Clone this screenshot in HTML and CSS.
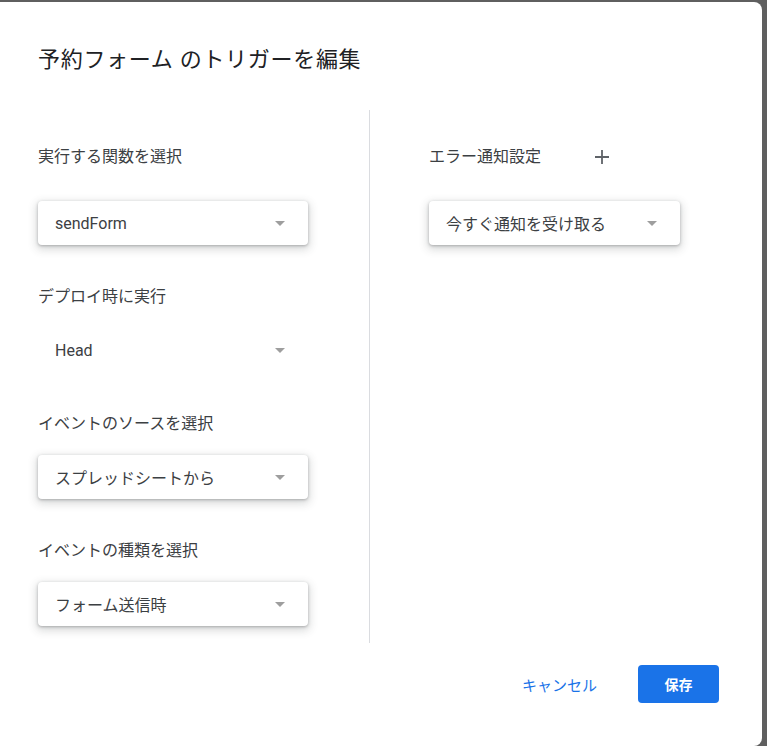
FILE: index.html
```html
<!DOCTYPE html>
<html lang="ja">
<head>
    <meta charset="UTF-8">
    <meta name="viewport" content="width=device-width, initial-scale=1.0">
    <title>トリガーを編集</title>
    <link rel="stylesheet" href="styles.css">
</head>
<body>
    <div class="dialog">
        <h1 class="title">予約フォーム のトリガーを編集</h1>

        <div class="columns">
            <div class="col col-left">
                <div class="field field-first">
                    <div class="field-label">実行する関数を選択</div>
                    <div class="select">
                        <span class="select-text">sendForm</span>
                        <span class="arrow"></span>
                    </div>
                </div>

                <div class="field">
                    <div class="field-label">デプロイ時に実行</div>
                    <div class="select flat">
                        <span class="select-text">Head</span>
                        <span class="arrow"></span>
                    </div>
                </div>

                <div class="field">
                    <div class="field-label">イベントのソースを選択</div>
                    <div class="select">
                        <span class="select-text">スプレッドシートから</span>
                        <span class="arrow"></span>
                    </div>
                </div>

                <div class="field">
                    <div class="field-label">イベントの種類を選択</div>
                    <div class="select">
                        <span class="select-text">フォーム送信時</span>
                        <span class="arrow"></span>
                    </div>
                </div>
            </div>

            <div class="divider"></div>

            <div class="col col-right">
                <div class="field field-first">
                    <div class="field-label">
                        エラー通知設定
                        <button class="icon-btn" aria-label="追加">
                            <svg width="16" height="16" viewBox="0 0 16 16">
                                <path d="M8 1v14M1 8h14" stroke="#5f6368" stroke-width="1.8" fill="none"/>
                            </svg>
                        </button>
                    </div>
                    <div class="select">
                        <span class="select-text">今すぐ通知を受け取る</span>
                        <span class="arrow"></span>
                    </div>
                </div>
            </div>
        </div>

        <div class="footer">
            <button class="btn-text">キャンセル</button>
            <button class="btn-primary">保存</button>
        </div>
    </div>
</body>
</html>
```

FILE: styles.css
```css
html, body {
    margin: 0;
    padding: 0;
    background-color: #5f5f5f;
    overflow: hidden;
    font-family: Roboto, "Noto Sans CJK JP", sans-serif;
}
.dialog {
    width: 762px;
    height: 744px;
    margin-top: 2px;
    background-color: #fff;
    border-radius: 0 8px 8px 0;
    padding: 44px 43px 43px 38px;
    box-sizing: border-box;
    display: flex;
    flex-direction: column;
}
.title {
    margin: 0;
    font-size: 22px;
    line-height: 28px;
    font-weight: 400;
    letter-spacing: 0.7px;
    color: #202124;
}
.columns {
    display: flex;
    margin-top: 36px;
    height: 533px;
}
.col {
    padding-top: 37px;
}
.col-left {
    width: 270px;
}
.col-right {
    width: 251px;
}
.divider {
    width: 1px;
    background-color: #dadce0;
    margin: 0 59px 0 61px;
}
.field + .field {
    margin-top: 42px;
}
.field-label {
    display: flex;
    align-items: center;
    font-size: 16px;
    line-height: 20px;
    height: 20px;
    color: #3c4043;
    margin-bottom: 21px;
}
.field-first .field-label {
    margin-bottom: 34px;
}
.icon-btn {
    width: 24px;
    height: 20px;
    margin-left: 49px;
    padding: 0;
    border: none;
    background: none;
    display: flex;
    align-items: center;
    justify-content: center;
}
.select {
    display: flex;
    align-items: center;
    height: 44px;
    padding: 0 23px 0 17px;
    background-color: #fff;
    border-radius: 4px;
    box-shadow: 0 1px 3px rgba(60, 64, 67, 0.35), 0 3px 8px 2px rgba(60, 64, 67, 0.18);
    font-size: 16px;
    color: #3c4043;
}
.select.flat {
    box-shadow: none;
}
.select-text {
    flex: 1;
}
.arrow {
    width: 0;
    height: 0;
    border-left: 5px solid transparent;
    border-right: 5px solid transparent;
    border-top: 5px solid #9e9e9e;
}
.footer {
    display: flex;
    justify-content: flex-end;
    align-items: center;
    margin-top: 22px;
    height: 38px;
}
.btn-text {
    height: 38px;
    padding: 0 16px;
    margin-right: 25px;
    border: none;
    background: none;
    font-family: inherit;
    font-size: 15px;
    color: #1a73e8;
    cursor: pointer;
}
.btn-primary {
    width: 81px;
    height: 38px;
    border: none;
    border-radius: 4px;
    background-color: #1a73e8;
    color: #fff;
    font-family: inherit;
    font-size: 14px;
    font-weight: bold;
    cursor: pointer;
}
```
